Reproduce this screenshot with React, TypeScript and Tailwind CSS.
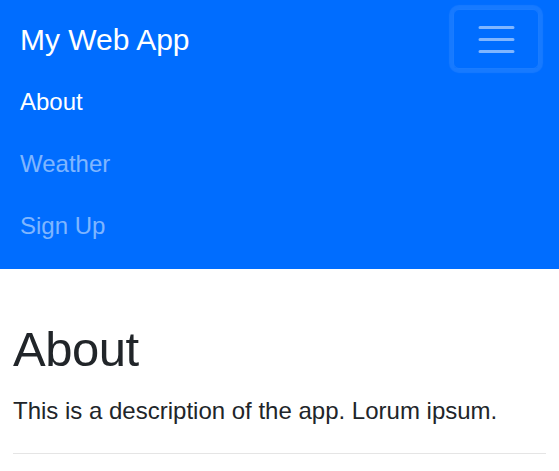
export default function App() {
  const links = [
    { label: 'About', active: true },
    { label: 'Weather', active: false },
    { label: 'Sign Up', active: false },
  ];

  return (
    <div className="min-h-[471px] bg-white font-['Liberation_Sans',Arial,sans-serif]">
      <nav className="bg-[#006dff] px-[20px] pt-[9px] pb-[12px]">
        <div className="flex h-[60px] items-center justify-between">
          <span className="text-[30px] leading-[45px] text-white">My Web App</span>
          <button className="flex h-[60px] w-[86px] items-center justify-center rounded-[6px] border border-white/10 shadow-[0_0_1px_4px_rgba(255,255,255,0.09)]">
            <svg width="45" height="45" viewBox="0 0 30 30" fill="none">
              <path
                d="M4 7h22M4 15h22M4 23h22"
                stroke="rgba(255,255,255,0.5)"
                strokeWidth="2"
                strokeLinecap="round"
              />
            </svg>
          </button>
        </div>
        <ul className="mt-[2px] flex flex-col">
          {links.map((l) => (
            <li key={l.label} className="flex h-[62px] items-center">
              <span className={l.active ? 'text-[24px] leading-[36px] text-white' : 'text-[24px] leading-[36px] text-white/50'}>
                {l.label}
              </span>
            </li>
          ))}
        </ul>
      </nav>
      <main className="px-[13px] pt-[49px]">
        <h1 className="text-[49px] leading-[62px] tracking-[-0.01em] text-[#212529]">About</h1>
        <p className="mt-[13px] text-[24px] leading-[36px] text-[#212529]">
          This is a description of the app. Lorum ipsum.
        </p>
        <hr className="mt-[24px] border-t border-[#e5e5e5]" />
      </main>
    </div>
  );
}
